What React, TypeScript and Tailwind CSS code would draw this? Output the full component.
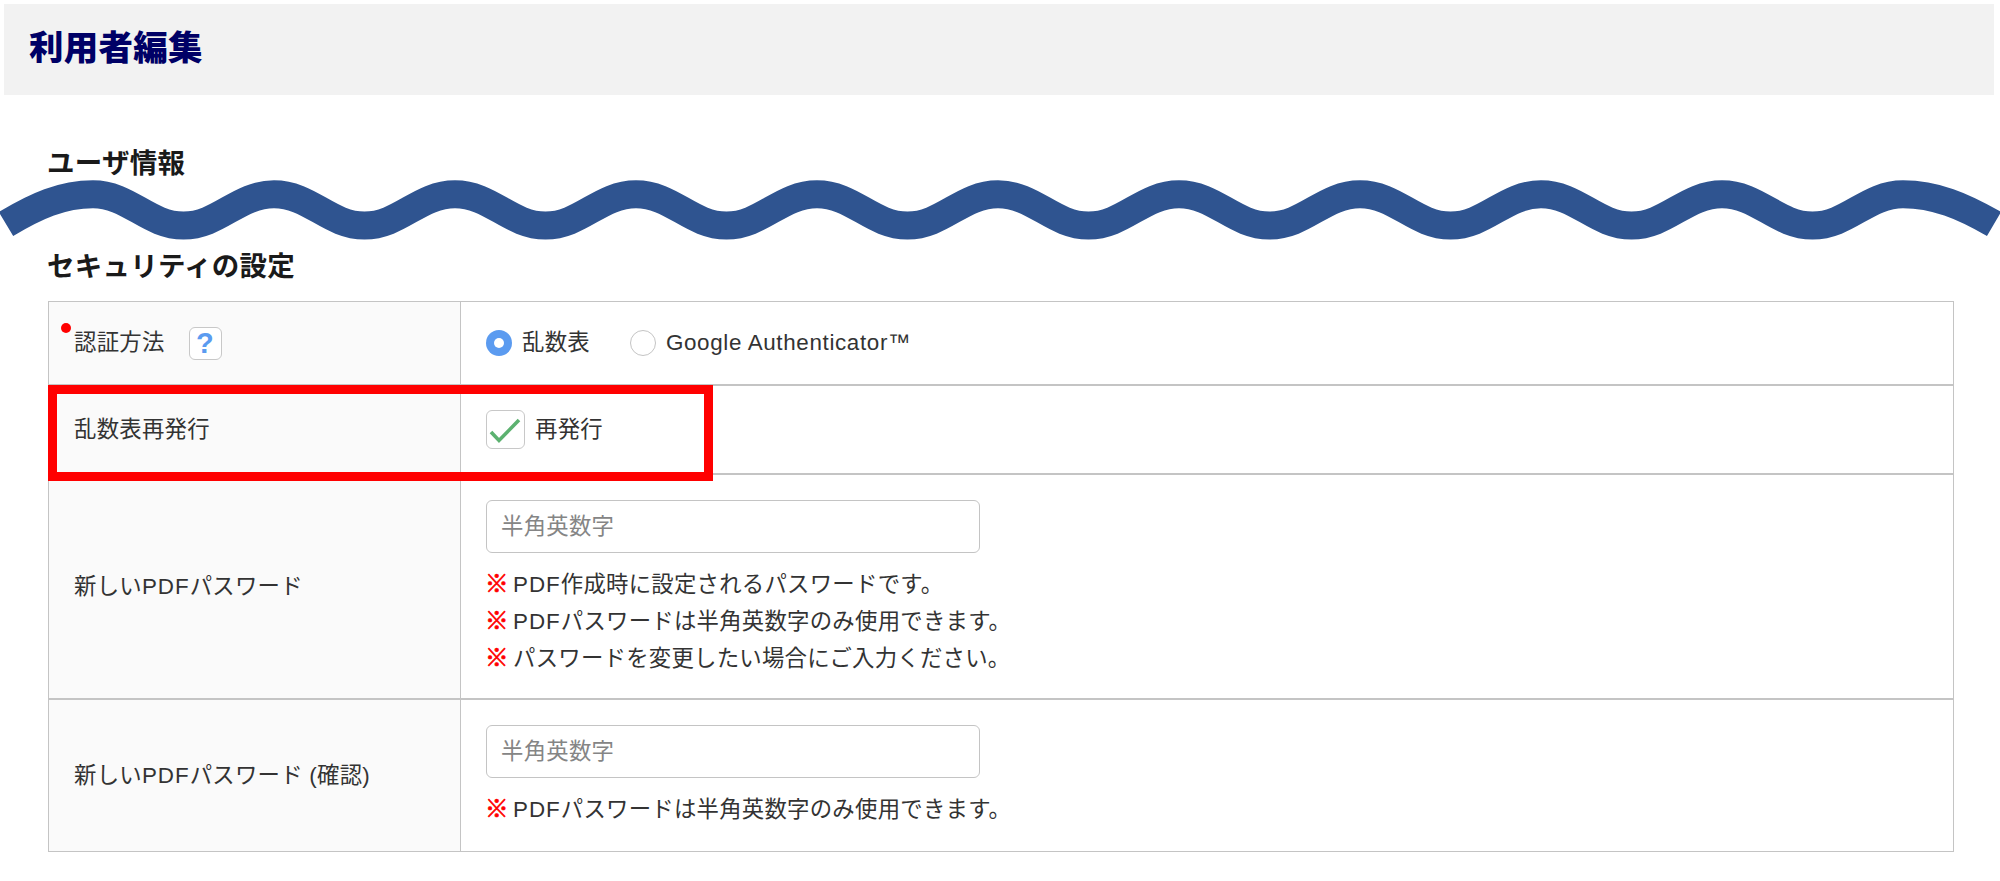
import React from "react";

const FONT = "font-['Liberation_Sans','Noto_Sans_CJK_JP',sans-serif]";

function wavePath() {
  let d = "M6 224 C36 206 62 194.25 93 194.25";
  let x = 93;
  for (let i = 0; i < 10; i++) {
    d += ` C${x + 36} 194.25 ${x + 55} 225.5 ${x + 90.5} 225.5`;
    d += ` C${x + 126} 225.5 ${x + 145} 194.25 ${x + 181} 194.25`;
    x += 181;
  }
  d += ` C${x + 32} 194.25 ${x + 60} 206 1994 224`;
  return d;
}

function Pdf() {
  return <span className="tracking-[1px]">PDF</span>;
}

function Note({ children }: { children: React.ReactNode }) {
  return (
    <p className="-ml-[1px] flex h-[37px] items-center text-[22.4px] leading-[37px] text-[#333]">
      <span className="mr-[7px] w-[21px] text-[23.5px] font-black text-[#f00] [-webkit-text-stroke:0.7px_#f00]">※</span>
      <span>{children}</span>
    </p>
  );
}

function Label({ children }: { children: React.ReactNode }) {
  return (
    <div className="relative flex w-[412px] shrink-0 items-center border-r border-[#c4c4c4] bg-[#fafafa] pl-[25px] text-[22.4px] text-[#333]">
      {children}
    </div>
  );
}

function PwInput() {
  return (
    <input
      placeholder="半角英数字"
      className="block h-[53px] w-[494px] rounded-[6px] border border-[#c4c4c4] bg-white px-[14px] text-[22.4px] text-[#333] outline-none placeholder:text-[#858585]"
    />
  );
}

export default function App() {
  return (
    <div className={`${FONT} relative h-[881px] w-full overflow-hidden bg-white tracking-[0.24px]`}>
      <div className="ml-[4px] mt-[4px] mr-[6px] flex h-[91px] items-center bg-[#f2f2f2] pb-[2px] pl-[25px]">
        <h1 className="text-[34.5px] font-black text-[#000066]">利用者編集</h1>
      </div>

      <h2 className="ml-[47px] mt-[55px] h-[28px] text-[27.5px] font-bold leading-[28px] text-[#1a1a1a]">ユーザ情報</h2>

      <svg className="block h-[63px] w-[2000px]" viewBox="0 178 2000 63" fill="none">
        <path d={wavePath()} stroke="#2f5490" strokeWidth="28" />
      </svg>

      <h2 className="ml-[47px] mt-[12px] h-[28px] text-[27.5px] font-bold leading-[28px] text-[#1a1a1a]">セキュリティの設定</h2>

      <div className="relative ml-[48px] mt-[20px] w-[1906px] border border-[#c4c4c4]">
        <div className="flex h-[84px] border-b-2 border-[#c4c4c4]">
          <Label>
            <span className="absolute left-[12px] top-[21px] h-[10px] w-[10px] rounded-full bg-[#f00]" />
            <span>認証方法</span>
            <span className="ml-[24px] flex h-[33px] w-[33px] items-center justify-center rounded-[6px] border border-[#c8c8c8] bg-white text-[29px] font-bold leading-none text-[#5b9bf0]">?</span>
          </Label>
          <div className="flex flex-1 items-center pl-[25px] text-[22.4px] text-[#333]">
            <span className="flex h-[26px] w-[26px] items-center justify-center rounded-full bg-[#5b9bf0]">
              <span className="h-[10px] w-[10px] rounded-full bg-white" />
            </span>
            <span className="ml-[10px]">乱数表</span>
            <span className="ml-[40px] h-[26px] w-[26px] rounded-full border border-[#c4c4c4] bg-white" />
            <span className="ml-[10px] tracking-[0.65px]">Google Authenticator™</span>
          </div>
        </div>

        <div className="flex h-[89px] border-b-2 border-[#c4c4c4]">
          <Label>乱数表再発行</Label>
          <div className="flex flex-1 items-center pl-[25px] text-[22.4px] text-[#333]">
            <span className="flex h-[39px] w-[39px] items-center justify-center rounded-[6px] border border-[#c8c8c8] bg-white">
              <svg width="37" height="37" viewBox="0 0 37 37" fill="none">
                <path d="M4 21 L12 29.5 L32 9" stroke="#5cb270" strokeWidth="3.6" />
              </svg>
            </span>
            <span className="ml-[10px]">再発行</span>
          </div>
        </div>

        <div className="flex h-[225px] border-b-2 border-[#c4c4c4]">
          <Label><span>新しい<Pdf />パスワード</span></Label>
          <div className="flex-1 pl-[25px] pt-[25px]">
            <PwInput />
            <div className="mt-[13px]">
              <Note><Pdf />作成時に設定されるパスワードです。</Note>
              <Note><Pdf />パスワードは半角英数字のみ使用できます。</Note>
              <Note>パスワードを変更したい場合にご入力ください。</Note>
            </div>
          </div>
        </div>

        <div className="flex h-[151px]">
          <Label><span>新しい<Pdf />パスワード (確認)</span></Label>
          <div className="flex-1 pl-[25px] pt-[25px]">
            <PwInput />
            <div className="mt-[13px]">
              <Note><Pdf />パスワードは半角英数字のみ使用できます。</Note>
            </div>
          </div>
        </div>

        <div className="pointer-events-none absolute left-[-1px] top-[83px] h-[96px] w-[665px] border-[9px] border-[#f00]" />
      </div>
    </div>
  );
}
